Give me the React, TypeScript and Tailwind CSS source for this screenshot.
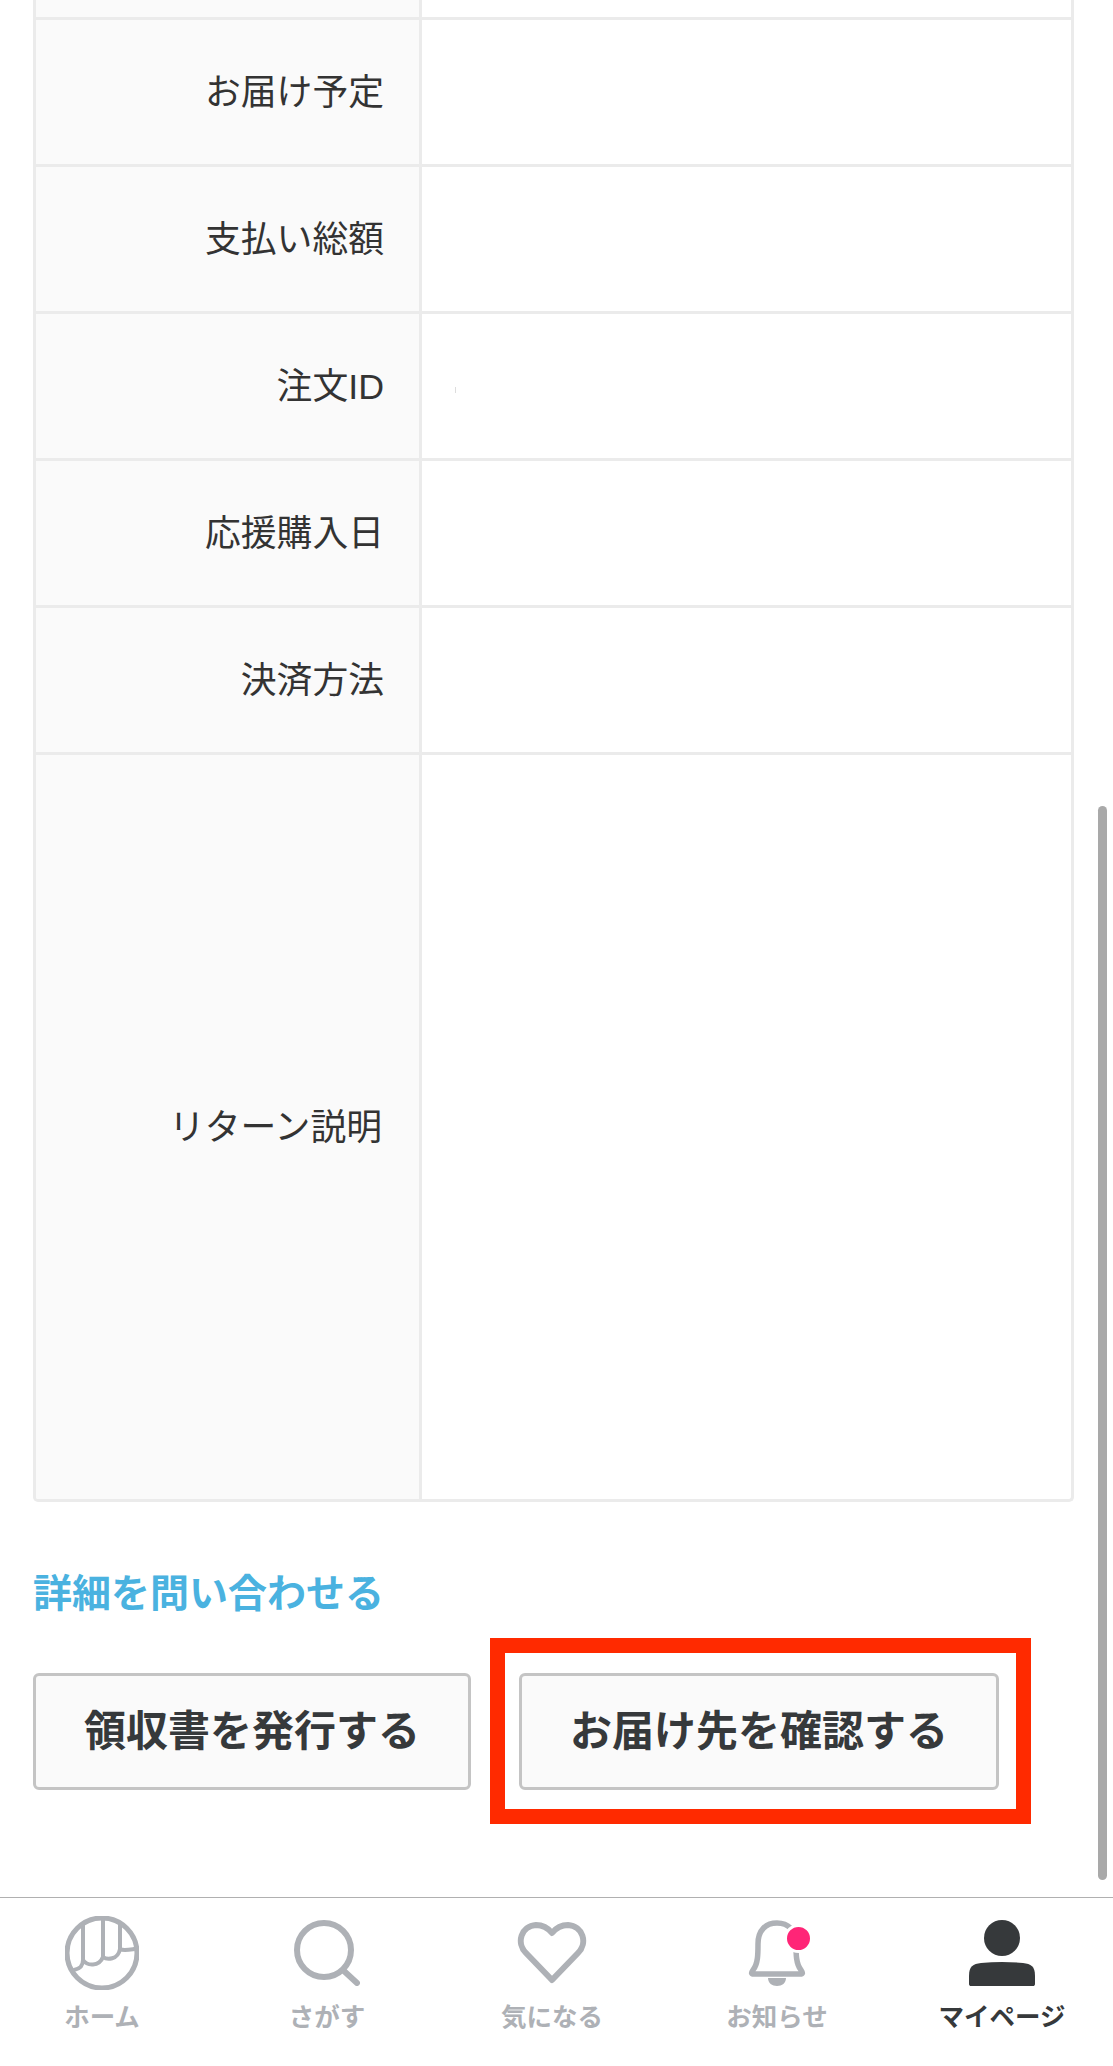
import React from 'react';

const font = 'font-["Liberation_Sans","Noto_Sans_CJK_JP",sans-serif]';

const rows = ['お届け予定', '支払い総額', '注文ID', '応援購入日', '決済方法'];

const HomeIcon = () => (
  <svg viewBox="0 0 74 74" className="h-[74px] w-[74px]" fill="none" stroke="#aeb1b6" strokeWidth="4" strokeLinecap="round">
    <ellipse cx="37" cy="37" rx="35" ry="35" strokeWidth="5" />
    <path d="M18 9V44M38 4V40M55 7V33" />
    <path d="M9 54C14 53 18 51 18 44C22 50 34 51 38 41C42 44 53 44 55 33C58 35 63 34 69 33" />
  </svg>
);

const SearchIcon = () => (
  <svg viewBox="0 0 66 66" className="h-[66px] w-[66px]" fill="none" stroke="#aeb1b6" strokeWidth="6" strokeLinecap="round">
    <ellipse cx="30" cy="30" rx="27" ry="27" />
    <path d="M50 51L63 63" />
  </svg>
);

const HeartIcon = () => (
  <svg viewBox="0 0 70 62" className="h-[62px] w-[70px]" fill="none" stroke="#aeb1b6" strokeWidth="6" strokeLinejoin="round">
    <path d="M35 58L9 31C-1 21 4 4 19 3C26 3 31 6 35 11C39 6 44 3 51 3C66 4 71 21 61 31Z" />
  </svg>
);

const BellIcon = () => (
  <div className="relative h-[66px] w-[60px]">
    <svg viewBox="0 0 60 66" className="h-[66px] w-[60px]" fill="none">
      <path d="M6 50C11 44 11 34 11 24C11 10 19 3 30 3C41 3 49 10 49 24C49 34 49 44 54 50C56 53 56 54 53 54H7C4 54 4 53 6 50Z" stroke="#aeb1b6" strokeWidth="5.5" strokeLinejoin="round" />
      <path d="M21 58H39C39 63 35 66 30 66C25 66 21 63 21 58Z" fill="#aeb1b6" />
    </svg>
    <span className="absolute left-[37px] top-[4px] h-[29px] w-[29px] rounded-full border-[3px] border-white bg-[#ff2577]" />
  </div>
);

const PersonIcon = () => (
  <svg viewBox="0 0 66 66" className="h-[66px] w-[66px]" fill="#36393b">
    <ellipse cx="33" cy="18" rx="18" ry="18" />
    <path d="M0 64V56C0 46 4 44 12 43C26 41.500 40 41.500 54 43C62 44 66 46 66 56V64C66 65.500 65 66 64 66H2C1 66 0 65.500 0 64Z" />
  </svg>
);

const navItems = [
  { label: 'ホーム', icon: <HomeIcon />, active: false },
  { label: 'さがす', icon: <SearchIcon />, active: false },
  { label: '気になる', icon: <HeartIcon />, active: false },
  { label: 'お知らせ', icon: <BellIcon />, active: false },
  { label: 'マイページ', icon: <PersonIcon />, active: true },
];

const App = () => {
  return (
    <div className={`relative h-[2066px] w-[1113px] overflow-hidden bg-white ${font}`}>
      <div className="h-[1897px] overflow-hidden pl-[33px]">
        <div className="w-[1041px] overflow-hidden rounded-b-[5px] border-x-[3px] border-b-[3px] border-[#ebebeb]">
          <div className="flex h-[17px]">
            <div className="w-[386px] border-r-[3px] border-[#ebebeb] bg-[#fafafa]" />
          </div>
          {rows.map((label) => (
            <div key={label} className="flex h-[147px] border-t-[3px] border-[#ebebeb]">
              <div className="flex w-[386px] items-center justify-end border-r-[3px] border-[#ebebeb] bg-[#fafafa] pr-[35px] pt-[4px] text-[35.800px] text-[#333333]">
                {label}
              </div>
              <div className="flex flex-1 items-center pl-[33px]">
                {label === '注文ID' && <span className="mt-[8px] h-[6px] w-px bg-[#dddddd]" />}
              </div>
            </div>
          ))}
          <div className="flex h-[747px] border-t-[3px] border-[#ebebeb]">
            <div className="flex w-[386px] items-center justify-end border-r-[3px] border-[#ebebeb] bg-[#fafafa] pr-[37px] pt-[4px] text-[35.800px] text-[#333333]">
              リターン説明
            </div>
            <div className="flex-1" />
          </div>
        </div>

        <div className="mt-[70px] text-[39px] font-bold leading-[44px] text-[#4ab2e0]">詳細を問い合わせる</div>

        <div className="mt-[57px] flex gap-[48px]">
          <button className="h-[117px] w-[438px] rounded-[6px] border-[3px] border-[#c4c4c4] bg-[#fafafa] text-[42px] font-bold text-[#36393b]">
            領収書を発行する
          </button>
          <button className="h-[117px] w-[480px] rounded-[6px] border-[3px] border-[#c4c4c4] bg-[#fafafa] text-[42px] font-bold text-[#36393b]">
            お届け先を確認する
          </button>
        </div>
      </div>

      {/* 注釈の赤枠 */}
      <div className="absolute left-[490px] top-[1638px] h-[186px] w-[541px] border-[15px] border-[#ff2a00]" />
      {/* スクロールバー */}
      <div className="absolute left-[1098px] top-[806px] h-[1074px] w-[9px] rounded-full bg-[#a9a9a9]" />

      <nav className="flex h-[169px] gap-[75px] border-t border-[#b0b0b0] pl-[27px] pt-[6px]">
        {navItems.map((item) => (
          <div key={item.label} className="flex w-[150px] flex-col items-center">
            <div className="flex h-[92px] w-full items-center justify-center pt-[5px]">{item.icon}</div>
            <div className={`mt-[6px] whitespace-nowrap text-[25.500px] font-bold leading-[30px] ${item.active ? 'text-[#36393b]' : 'text-[#aeb1b6]'}`}>
              {item.label}
            </div>
          </div>
        ))}
      </nav>
    </div>
  );
};

export default App;
